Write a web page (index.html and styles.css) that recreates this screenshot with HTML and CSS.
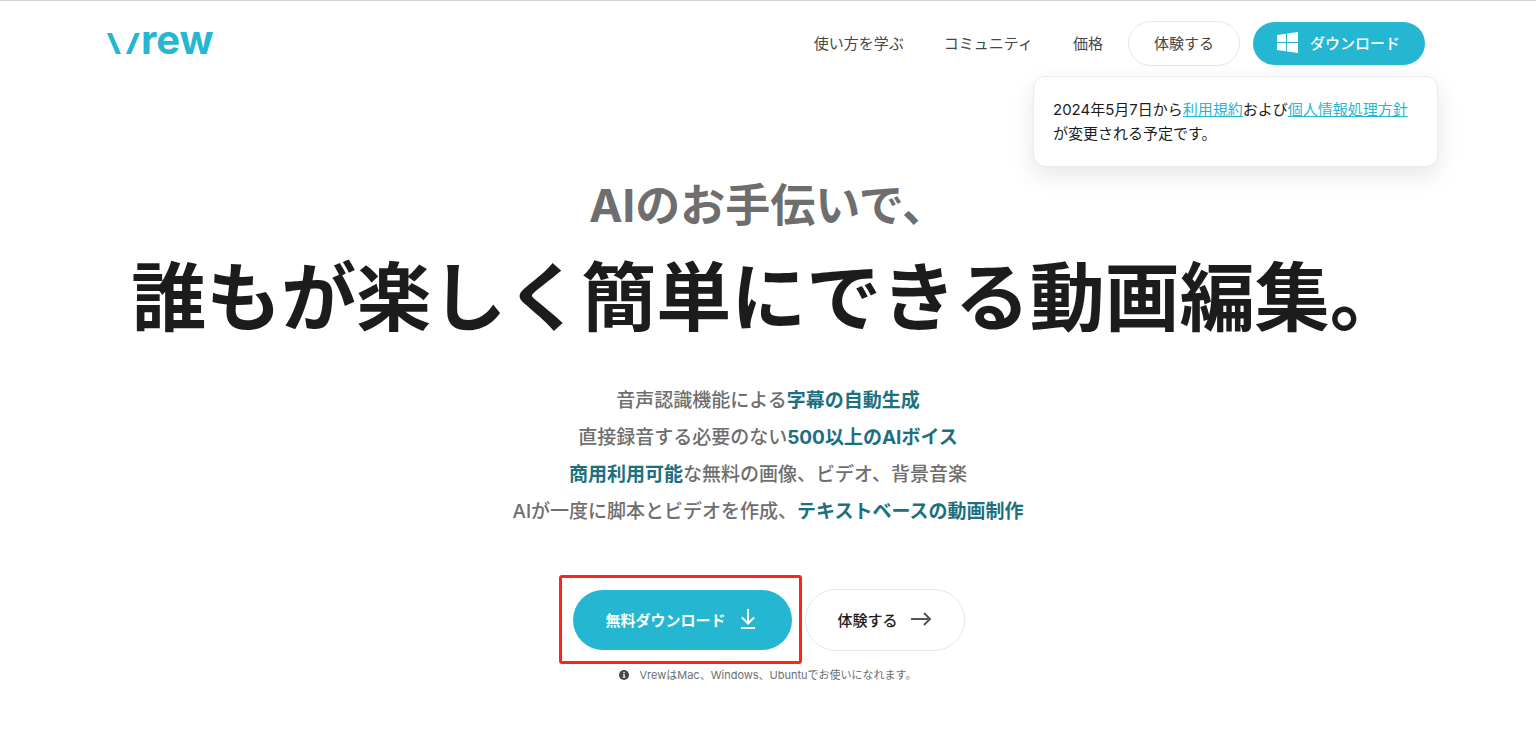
FILE: index.html
```html
<!DOCTYPE html>
<html lang="ja">
<head>
    <meta charset="UTF-8">
    <meta name="viewport" content="width=device-width, initial-scale=1.0">
    <title>Vrew</title>
    <link rel="stylesheet" href="styles.css">
</head>
<body>
    <header class="header">
        <a href="#" class="logo" aria-label="Vrew">
            <svg class="logo-mark" viewBox="0 0 34 21" aria-hidden="true">
                <path d="M0 0h5l9 21H9z"/>
                <path d="M28 0h5l-9 21h-5z"/>
            </svg>
            <span>rew</span>
        </a>
        <nav class="nav">
            <a href="#" class="nav-link">使い方を学ぶ</a>
            <a href="#" class="nav-link">コミュニティ</a>
            <a href="#" class="nav-link">価格</a>
            <button type="button" class="btn btn-outline nav-try">体験する</button>
            <button type="button" class="btn btn-primary nav-download">
                <svg class="icon-windows" viewBox="0 0 21 21" aria-hidden="true">
                    <path d="M0 3l9-1.300V10H0zM10 1.500L21 0v10H10zM0 11h9v8.300L0 18zM10 11h11v10l-11-1.500z"/>
                </svg>
                ダウンロード
            </button>
        </nav>
        <div class="notice">
            <p>2024年5月7日から<a href="#">利用規約</a>および<a href="#">個人情報処理方針</a>が変更される予定です。</p>
        </div>
    </header>

    <main class="hero">
        <h1>
            <span class="hero-sub">AIのお手伝いで、</span>
            <span class="hero-title">誰もが楽しく簡単にできる動画編集。</span>
        </h1>
        <p class="hero-text">
            音声認識機能による<strong>字幕の自動生成</strong><br>
            直接録音する必要のない<strong>500以上のAIボイス</strong><br>
            <strong>商用利用可能</strong>な無料の画像、ビデオ、背景音楽<br>
            AIが一度に脚本とビデオを作成、<strong>テキストベースの動画制作</strong>
        </p>
        <div class="hero-buttons">
            <div class="highlight">
                <button type="button" class="btn btn-primary btn-large">
                    無料ダウンロード
                    <svg class="icon-download" viewBox="0 0 16 22" aria-hidden="true">
                        <path d="M8 1v14M2 9.500l6 6 6-6M1 20h14"/>
                    </svg>
                </button>
            </div>
            <button type="button" class="btn btn-outline btn-large btn-try">
                体験する
                <svg class="icon-arrow" viewBox="0 0 22 14" aria-hidden="true">
                    <path d="M1 7h19M14 1l6 6-6 6"/>
                </svg>
            </button>
        </div>
        <p class="hero-note">
            <svg class="icon-info" viewBox="0 0 10 10" aria-hidden="true">
                <circle cx="5" cy="5" r="5"/>
                <path d="M4.300 2h1.500v1.200H4.300zM3.800 4.200h2V7h.6v.8H3.700V7h.7V5h-.6z"/>
            </svg>
            VrewはMac、Windows、Ubuntuでお使いになれます。
        </p>
    </main>
</body>
</html>
```

FILE: styles.css
```css
* {
    box-sizing: border-box;
}
body {
    margin: 0;
    border-top: 1px solid #d4d4d4;
    background: #fff;
    color: #1c1c1c;
    font-family: Inter, "Noto Sans CJK JP", sans-serif;
    font-size: 15px;
}
.header {
    position: relative;
    display: flex;
    align-items: center;
    justify-content: space-between;
    padding: 20px 111px 0 107px;
}
.logo {
    display: flex;
    align-items: baseline;
    padding-bottom: 7px;
    color: #25b7d1;
    font-size: 40px;
    font-weight: 700;
    line-height: 38px;
    text-decoration: none;
}
.logo-mark {
    width: 34px;
    height: 21px;
    fill: #25b7d1;
}
.nav {
    display: flex;
    align-items: center;
}
.nav-link {
    margin-right: 40px;
    padding-bottom: 2px;
    color: #474747;
    text-decoration: none;
}
.nav-link:nth-child(3) {
    margin-right: 25px;
}
.btn {
    display: flex;
    align-items: center;
    justify-content: center;
    border: none;
    border-radius: 32px;
    font-family: inherit;
    font-size: 15px;
    cursor: pointer;
}
.btn-primary {
    background: #25b7d1;
    color: #fff;
}
.btn-outline {
    border: 1px solid #e6e6e6;
    background: #fff;
    color: #1c1c1c;
}
.nav-try {
    height: 45px;
    margin-right: 13px;
    padding: 0 25px 2px;
    color: #474747;
}
.nav-download {
    gap: 12px;
    height: 43px;
    padding: 0 25px 2px 24px;
    font-weight: 500;
}
.icon-windows {
    width: 21px;
    height: 21px;
    fill: #fff;
}
.notice {
    position: absolute;
    top: 75px;
    right: 98px;
    width: 405px;
    padding: 21px 19px 20px;
    border: 1px solid #ebebeb;
    border-radius: 12px;
    background: #fff;
    box-shadow: 0 8px 24px rgba(0, 0, 0, 0.1);
    line-height: 24px;
}
.notice p {
    margin: 0;
}
.notice a {
    color: #25b7d1;
}
.hero {
    display: flex;
    flex-direction: column;
    align-items: center;
    padding-top: 110px;
    text-align: center;
}
.hero h1 {
    margin: 0;
}
.hero-sub,
.hero-title {
    display: block;
}
.hero-sub {
    color: #6e6e6e;
    font-size: 45px;
    line-height: 60px;
}
.hero-title {
    margin-top: 12px;
    font-size: 75px;
    line-height: 100px;
}
.hero-text {
    margin: 34px 0 0;
    color: #6e6e6e;
    font-size: 19px;
    font-weight: 500;
    line-height: 37px;
}
.hero-text strong {
    color: #1c7080;
    font-weight: 700;
}
.hero-buttons {
    display: flex;
    align-items: center;
    gap: 13px;
    margin-top: 59px;
    padding-left: 2px;
}
.highlight {
    position: relative;
}
.highlight::after {
    content: "";
    position: absolute;
    inset: -15px -10px -14px -14px;
    border: 3px solid #ff2419;
    border-radius: 3px;
    pointer-events: none;
}
.btn-large {
    gap: 14px;
    height: 60px;
    padding: 0 36px 2px 32px;
    font-weight: 700;
}
.btn-try {
    gap: 12px;
    height: 62px;
    padding: 0 32px 2px;
    font-weight: 500;
}
.icon-download {
    width: 16px;
    height: 22px;
    fill: none;
    stroke: #fff;
    stroke-width: 2;
}
.icon-arrow {
    width: 22px;
    height: 14px;
    fill: none;
    stroke: #555;
    stroke-width: 2;
}
.hero-note {
    display: flex;
    align-items: center;
    gap: 10px;
    margin: 14px 0 0;
    color: #6e6e6e;
    font-size: 11px;
    line-height: 20px;
}
.icon-info {
    width: 10px;
    height: 10px;
    fill: #474747;
}
.icon-info path {
    fill: #fff;
}
@media (max-width: 768px) {
    .header {
        flex-wrap: wrap;
        padding: 20px;
    }
    .nav-link,
    .notice {
        display: none;
    }
    .hero {
        padding: 60px 20px;
    }
    .hero-sub {
        font-size: 26px;
        line-height: 40px;
    }
    .hero-title {
        font-size: 38px;
        line-height: 52px;
    }
}
```
